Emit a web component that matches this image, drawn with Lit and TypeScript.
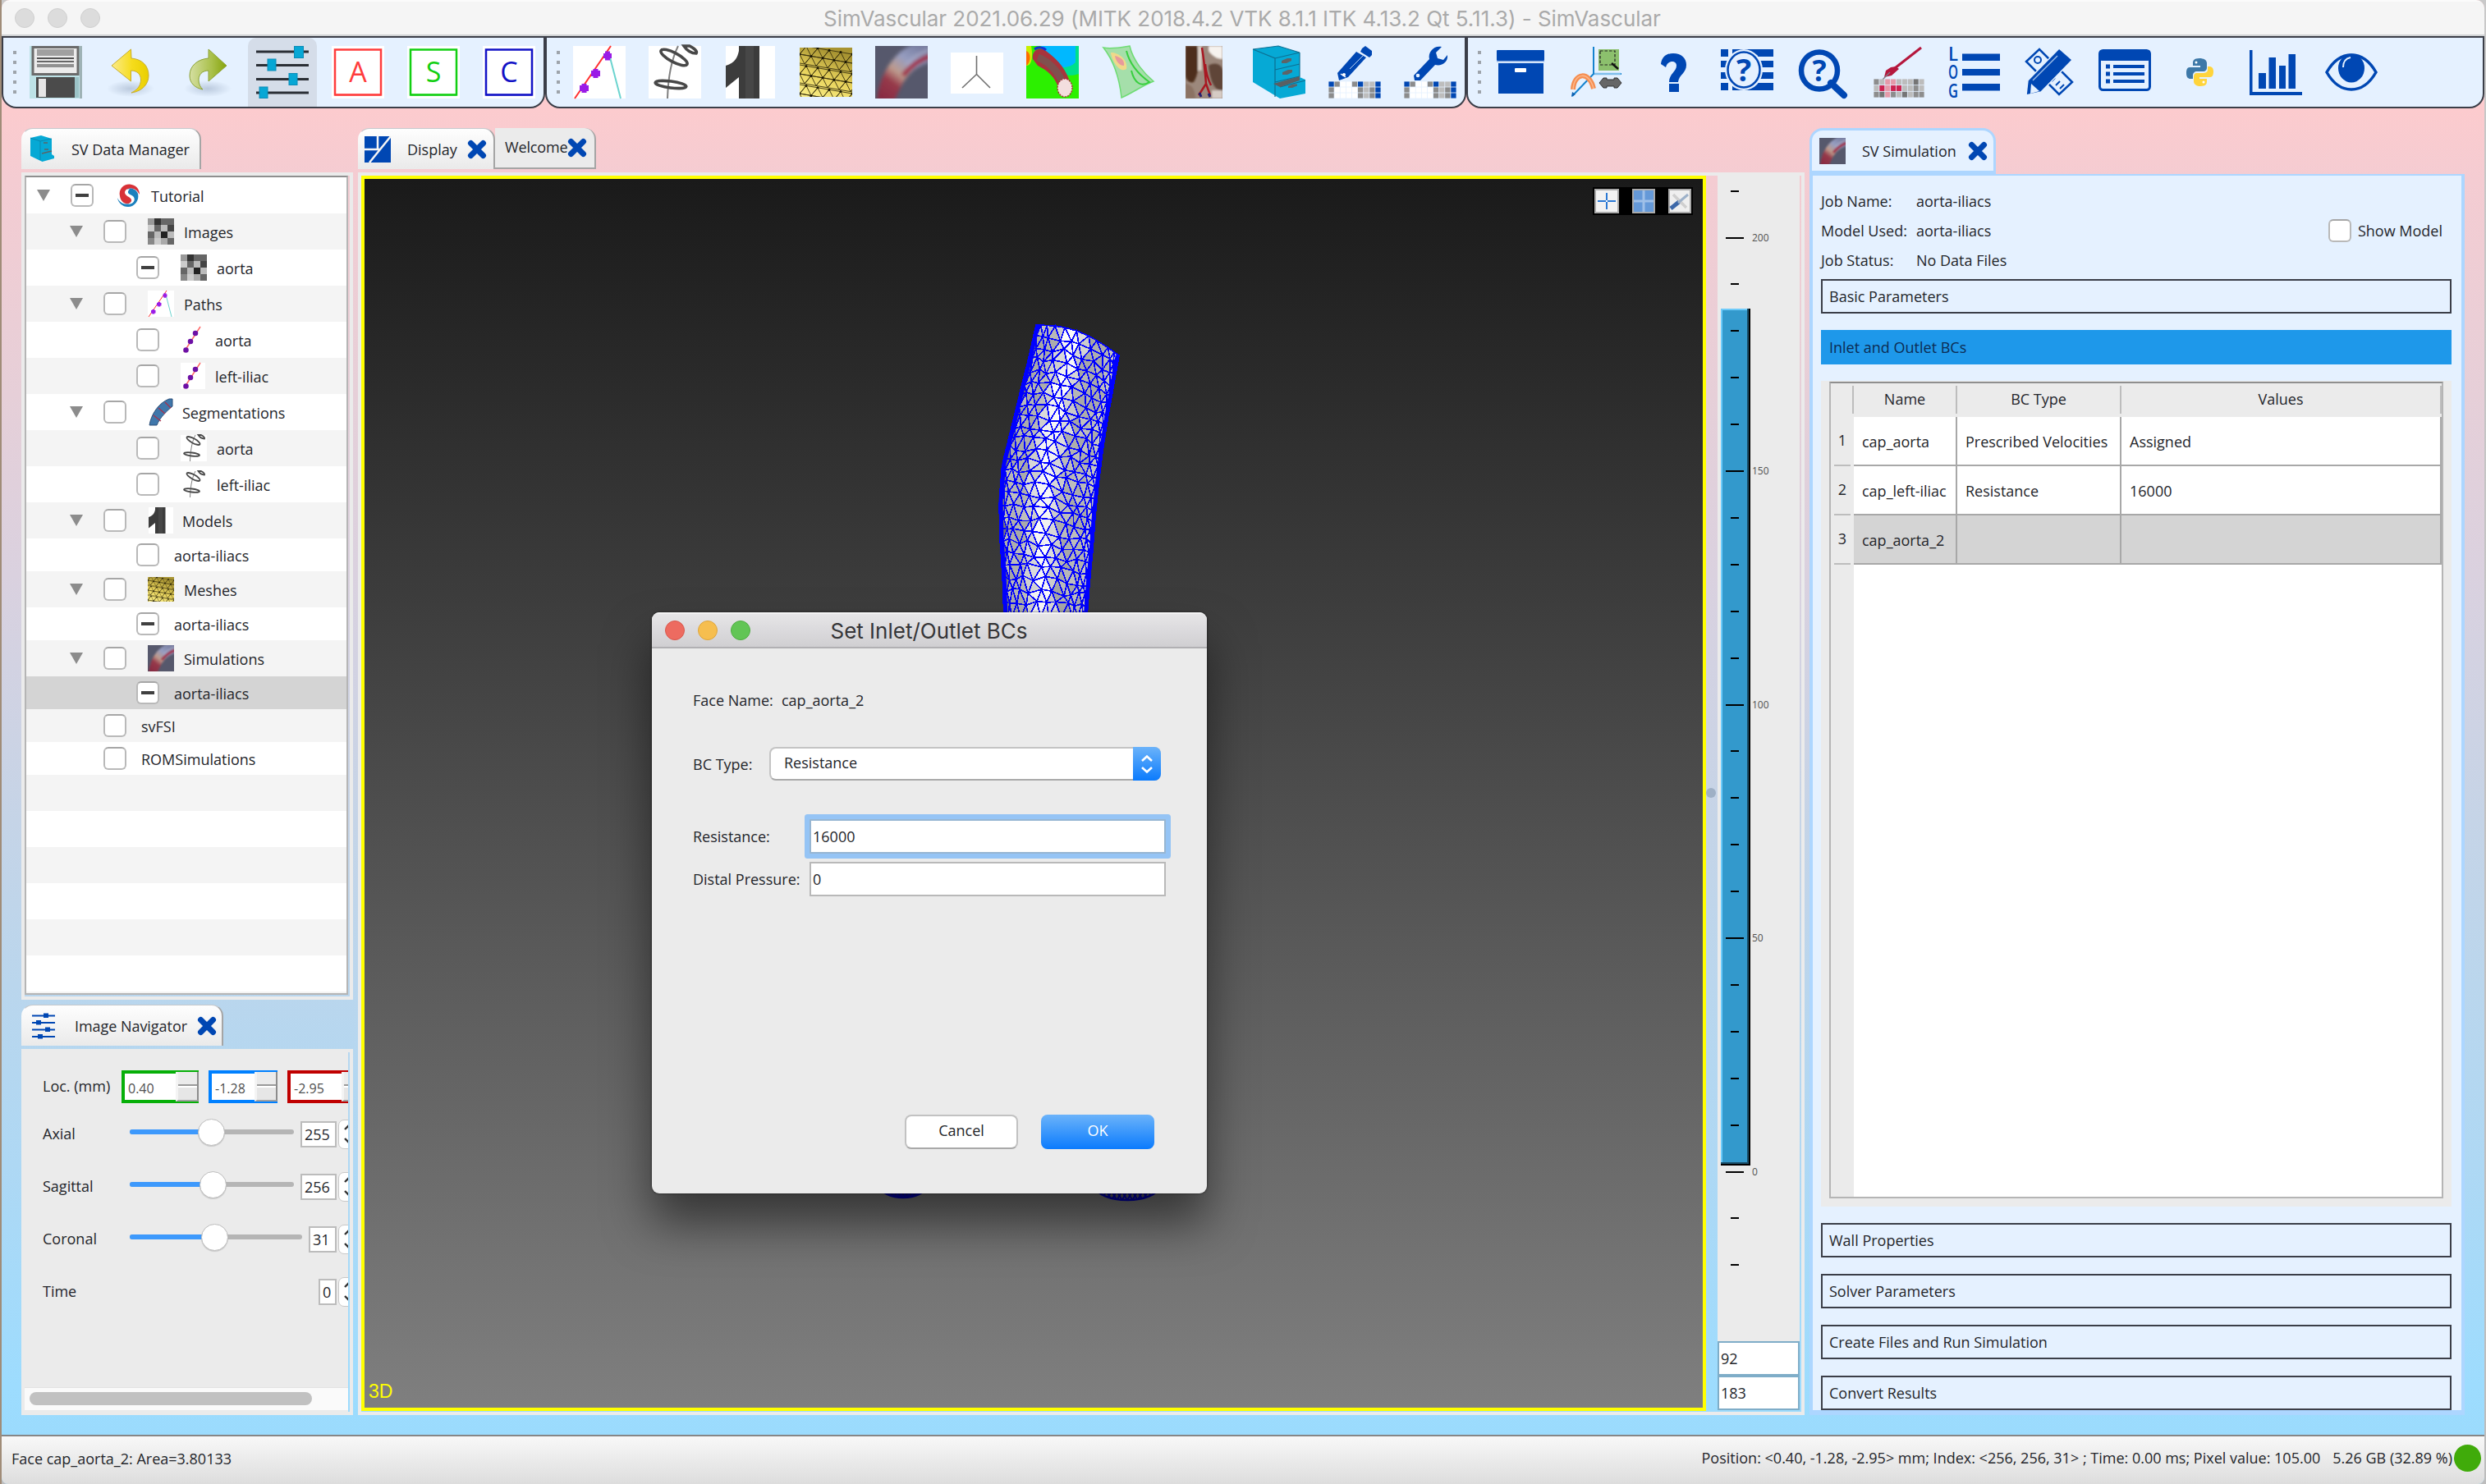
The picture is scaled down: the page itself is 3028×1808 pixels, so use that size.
import { LitElement, html, svg, css, nothing, TemplateResult, SVGTemplateResult } from "lit";
import { customElement } from "lit/decorators.js";
import { classMap } from "lit/directives/class-map.js";

const BLUE = "#0047b3";

/* ---------- deterministic noise, used by the textured glyphs and the mesh ---------- */
const noise = (n: number) => {
  const v = Math.sin(n * 127.1 + 311.7) * 43758.5453;
  return v - Math.floor(v);
};
const gray = (v: number) => {
  const c = Math.round(Math.max(0, Math.min(255, v)));
  return `rgb(${c},${c},${c})`;
};

/* ---------- pixel grids ---------- */
const cells = (cols: number, rows: number, x0: number, y0: number, w: number, h: number, inset: number, fill: (c: number, r: number) => string) => {
  const out: SVGTemplateResult[] = [];
  const cw = w / cols;
  const ch = h / rows;
  for (let r = 0; r < rows; r++)
    for (let c = 0; c < cols; c++)
      out.push(svg`<rect x=${x0 + c * cw + inset} y=${y0 + r * ch + inset} width=${cw - 2 * inset} height=${ch - 2 * inset} fill=${fill(c, r)} />`);
  return out;
};

const editGrid = () =>
  cells(9, 3, 0, 43, 64, 21, 0.4, (c, r) => {
    const rows = ["BgwwgBllB", "gwwwwglgB", "gwwwwglgB"];
    const map: Record<string, string> = { B: BLUE, g: "#8c8c8c", l: "#bdbdbd", w: "#ffffff" };
    return map[rows[r][c]];
  });

const meshLines = () => {
  const out: SVGTemplateResult[] = [];
  for (let r = 0; r < 6; r++)
    for (let c = 0; c < 6; c++) {
      const x = c * 14 + (r % 2) * 6 - 6;
      const y = -2 + r * 12 + c * 2.4;
      out.push(svg`<path d="M${x} ${y}l14 2.400l-8 9.600zM${x} ${y}l-8 9.600l14 2.400" fill="none" stroke="#3a3210" stroke-width="0.900" />`);
      out.push(svg`<circle cx=${x} cy=${y} r="1.500" fill="#1a1604" />`);
    }
  return out;
};

const qmark = (x: number, y: number, size: number, fill = BLUE) =>
  svg`<text x=${x} y=${y} font-size=${size} font-weight="700" fill=${fill} text-anchor="middle" class="glyph">?</text>`;

const ICONS: Record<string, () => SVGTemplateResult> = {
  save: () => svg`
    <rect width="64" height="64" fill="#bde2e6" /><rect x="61" width="3" height="64" fill="#9fb3b6" />
    <rect x="4" y="1.500" width="55" height="33" fill="#ececec" stroke="#6b6b6b" stroke-width="3" />
    <rect x="9" y="4" width="45" height="8" fill="#a0a0a0" /><rect x="9" y="14" width="45" height="2" fill="#555" />
    <rect x="9" y="18" width="45" height="2" fill="#666" /><rect x="9" y="22" width="45" height="4" fill="#909090" />
    <rect x="8" y="38" width="47" height="25" fill="#4b4b4b" /><rect x="11" y="40" width="9" height="22" fill="#e6e6e6" />
    <rect x="55" y="38" width="5" height="25" fill="#9cc3c7" />`,
  undo: () => svg`
    <defs><radialGradient id="sh"><stop offset="0" stop-color="#9fb0c8" stop-opacity=".6" /><stop offset="1" stop-color="#9fb0c8" stop-opacity="0" /></radialGradient>
    <linearGradient id="ye" x1="0" x2="1"><stop offset="0" stop-color="#fbeb8c" /><stop offset=".55" stop-color="#f6dc1c" /><stop offset="1" stop-color="#e9cf00" /></linearGradient></defs>
    <ellipse cx="31" cy="52" rx="29" ry="10" fill="url(#sh)" />
    <path d="M31.500 4L8 24l23.500 19V30c8 0 12 5 12 11c0 8-5 13-11.500 16c14-2 21-11 21-21c0-12-8-20-21-21z" fill="url(#ye)" stroke="#c9ae2c" stroke-width="1" />`,
  redo: () => svg`
    <defs><radialGradient id="sh2"><stop offset="0" stop-color="#9fb0c8" stop-opacity=".6" /><stop offset="1" stop-color="#9fb0c8" stop-opacity="0" /></radialGradient>
    <linearGradient id="gr" x1="0" x2="1"><stop offset="0" stop-color="#d5dfa2" /><stop offset=".6" stop-color="#a9c04a" /><stop offset="1" stop-color="#86a40c" /></linearGradient></defs>
    <ellipse cx="33" cy="52" rx="29" ry="10" fill="url(#sh2)" />
    <path d="M34 4l22 20l-22 19V30c-8 0-12 5-12 11c0 6 2 9 5 12c-10-2-16-8-16-17c0-12 10-20 23-21z" fill="url(#gr)" stroke="#8ca236" stroke-width="1" />`,
  sliders: () => svg`
    <path d="M0 7H64M0 23.500H64M0 40.500H64M0 57H64" stroke="#2b2f36" stroke-width="3" />
    <g fill="#07a7d5" stroke="#0b8cb8" stroke-width="1"><rect x="46.500" y="0.500" width="11" height="14" /><rect x="14" y="16" width="10" height="14" /><rect x="40" y="33.500" width="10" height="14" /><rect x="4" y="50" width="10" height="13.500" /></g>`,
  A: () => letter("A", "#ff3c3c"),
  S: () => letter("S", "#12cf12"),
  C: () => letter("C", "#1212c6"),
  path: () => svg`
    <rect width="64" height="64" fill="#fff" /><path d="M2 64L46 0" stroke="#ff3030" stroke-width="2" /><path d="M45 14L58 64" stroke="#6cd4cf" stroke-width="2" fill="none" />
    <g fill="#9a1be6"><path d="M37 9h10v6h-10zM39 6.500h6v11h-6z" /><path d="M22 30h11v7h-11zM24.500 28h6v11h-6z" /><path d="M8 48h11v7h-11zM10.500 46h6v11h-6z" /></g>`,
  pathnode: () => svg`
    <rect width="60" height="64" fill="#fff" /><path d="M8 62L48 0" stroke="#ff6a6a" stroke-width="3" />
    <g fill="#6d10a5"><circle cx="13" cy="57" r="6.500" /><circle cx="24" cy="36" r="6.500" /><circle cx="36" cy="16" r="6.500" /></g>`,
  contour: () => svg`
    <rect width="64" height="64" fill="#fff" /><path d="M36 0C30 12 24 30 23 64" stroke="#808080" stroke-width="2" fill="none" />
    <g fill="none" stroke="#484848" stroke-width="3.600"><ellipse cx="31" cy="14" rx="18" ry="5.500" transform="rotate(28 31 14)" /><ellipse cx="27" cy="47" rx="19" ry="4" transform="rotate(7 27 47)" /><path d="M43 0c4 6 10 9 15 9c2-3-4-7-8-9z" /></g>`,
  segment: () => svg`
    <path d="M4 64C8 38 26 10 52 0L60 0V18C48 28 30 44 22 64z" fill="#3f77ab" stroke="#2c4f78" stroke-width="2" />
    <path d="M14 40l18 14M26 22l16 14M42 8l14 14" stroke="#a8324c" stroke-width="2.500" />`,
  model: () => svg`
    <rect x="2" width="60" height="64" fill="#fff" /><path d="M18 0H43V64H18V38L2 51V24C14 20 16 14 18 6z" fill="#3c3c3c" /><path d="M26 0H36V64H26z" fill="#474747" />`,
  mesh: () => svg`
    <defs><linearGradient id="me" x1="0" y1="1" x2=".4" y2="0"><stop offset="0" stop-color="#fbf08a" /><stop offset=".5" stop-color="#e8d35c" /><stop offset="1" stop-color="#a89432" /></linearGradient>
    <clipPath id="mc"><rect y="2" width="64" height="60" /></clipPath></defs>
    <rect y="2" width="64" height="60" fill="url(#me)" /><g clip-path="url(#mc)">${meshLines()}</g>`,
  sim: () => svg`
    <defs><linearGradient id="si" x1="0" y1="1" x2=".7" y2="0"><stop offset="0" stop-color="#852640" /><stop offset=".35" stop-color="#963a4a" /><stop offset=".52" stop-color="#bd9a8c" /><stop offset=".75" stop-color="#969dc0" /><stop offset="1" stop-color="#7b81a4" /></linearGradient>
    <filter id="sb"><feGaussianBlur stdDeviation="2" /></filter><clipPath id="sc"><rect width="64" height="64" /></clipPath></defs>
    <rect width="64" height="64" fill="#56586c" />
    <g clip-path="url(#sc)"><g filter="url(#sb)"><path d="M2 66C6 34 22 8 46-2H66V20C46 26 36 36 24 66z" fill="url(#si)" /><path d="M68 12C52 17 42 26 34 36" stroke="#a02a44" stroke-width="6" fill="none" /><path d="M66 5C52 9 44 16 38 24" stroke="#aeadc8" stroke-width="4" fill="none" opacity=".6" /></g></g>`,
  branch: () => svg`<rect y="8" width="64" height="50" fill="#fff" /><path d="M31.500 12V34.500L14 51M31.500 34.500L48 51" fill="none" stroke="#707070" stroke-width="1.600" />`,
  result: () => svg`
    <rect width="64" height="64" fill="#2cf000" /><path d="M18 0H64V34C46 40 34 30 22 26z" fill="#00e08a" /><path d="M18 0H60V20C50 30 36 26 28 18z" fill="#00b8ff" />
    <path d="M0 6C8 8 8 22 0 24z" fill="#ff6a00" /><path d="M0 24C8 24 8 10 6 0H0V6C6 8 6 20 0 24z" fill="#c8f000" />
    <path d="M8 16C6 6 16 0 24 6C40 18 50 30 54 48L40 54C36 38 26 30 14 24z" fill="#a8343c" /><path d="M14 14C26 18 38 30 44 44" stroke="#80504e" stroke-width="9" fill="none" /><path d="M10 4c4-3 10-3 14 1" stroke="#1530d0" stroke-width="3" fill="none" /><ellipse cx="47" cy="51" rx="9" ry="11" fill="#f3dede" stroke="#a8343c" stroke-width="1.500" stroke-dasharray="2 1.500" />`,
  surface: () => svg`
    <path d="M2 2C12 4 22 2 34 0C38 18 52 34 63 43C50 48 36 58 24 63C22 44 16 20 2 2z" fill="#a5dfaa" stroke="#6fdc74" stroke-width="1.500" />
    <path d="M11 8C20 8 32 16 30 28C22 34 12 18 11 8z" fill="#efd98a" /><path d="M16 12C24 14 28 18 27 24C21 24 17 18 16 12z" fill="#e79a9c" /><path d="M30 6C34 22 44 34 58 44C48 50 40 46 36 30" fill="none" stroke="#37cf3e" stroke-width="2" />`,
  anatomy: () => svg`
    <defs><filter id="ab"><feGaussianBlur stdDeviation="1.300" /></filter><clipPath id="ac"><rect x="10" width="45" height="64" /></clipPath></defs>
    <g clip-path="url(#ac)"><rect x="10" width="45" height="64" fill="#9c887c" /><g filter="url(#ab)">
    <path d="M10 0H24C28 16 26 34 20 44C14 46 10 40 10 36z" fill="#4d2f1c" /><path d="M38 24C48 18 56 24 56 34V54C46 56 40 44 38 24z" fill="#5f4438" /><path d="M38 0H55V16C48 16 42 12 38 6z" fill="#f6f2ee" /><path d="M25 0h5v30h-5z" fill="#d8cdc4" /><path d="M10 46c6 0 12 6 12 18h-12z" fill="#8b7264" /><path d="M42 54h13v10h-13z" fill="#d6cbc4" /></g>
    <path d="M30 2C33 20 34 34 35 46L40 60M35 46L26 60M34 22C35 34 37 40 41 48" fill="none" stroke="#a81822" stroke-width="2.500" /><path d="M27 57l2 5M38 58l2 4" stroke="#242070" stroke-width="3" /></g>`,
  cabinet: () => svg`
    <path d="M0 4L31 0L57 8V38L64 41V58L33 64L0 44z" fill="#06a9d5" />
    <g fill="none" stroke="#0d6f92" stroke-width="1.200"><path d="M0 4L27 15V62M27 15L57 8M27 29L57 22M27 44L57 37M57 8V38M33 50L64 42M0 4L31 0L57 8" /></g>
    <path d="M25 46L57 37V42L33 50z" fill="#5a5f63" /><path d="M35 18l7-3h5v3l-6 3h-6zM36 32l7-3h5v3l-6 3h-6zM43 49l6-2.500h5v2l-6 2.500h-5z" fill="#5d6468" />`,
  cabinetSmall: () => svg`
    <path d="M4 6L30 0L56 8V46L62 50V56L33 64L4 50z" fill="#06a9d5" /><path d="M4 6L28 14V60M28 14L56 8" fill="none" stroke="#0d7fa4" stroke-width="1.500" />
    <path d="M36 18h10M38 34h10M32 44l24-6" stroke="#5a6468" stroke-width="3" />`,
  pencilGrid: () => svg`
    <g fill=${BLUE}><path d="M11 33L34 7L46 14L24 38L13 42z" /><path d="M41 3L45 0L53 6V11L50 14L39 7z" /></g><path d="M15 34l6 4" stroke="#fff" stroke-width="1.500" /><circle cx="19" cy="35" r="2" fill="#fff" /><path d="M26 28L42 12" stroke="#b8d0f0" stroke-width="1" />${editGrid()}`,
  wrenchGrid: () => svg`
    <path d="M12 36L31 16C29 8 36-1 46 1L39 8L41 15L48 17L53 11C54 20 46 25 38 23L20 42H13z" fill=${BLUE} /><circle cx="17" cy="36" r="2.300" fill="#e5f1ff" />${editGrid()}`,
  box: () => svg`
    <g fill=${BLUE}><rect x="3" y="5" width="58" height="13" rx="1" /><rect x="5" y="21" width="55" height="37" /></g><rect x="3" y="18" width="58" height="1.500" fill="#8fb1e4" /><rect x="25" y="27" width="14" height="5" rx="1" fill="#fff" />`,
  axes: () => svg`
    <rect x="35" y="4" width="25" height="26" fill="#8cc06d" /><rect x="37" y="6" width="18" height="17" fill="none" stroke="#222" stroke-width="1.200" stroke-dasharray="3.500 2" /><path d="M51 21l8 7" stroke="#111" stroke-width="2.500" />
    <path d="M29 1V34H63M29 34L3 61" fill="none" stroke="#1583cf" stroke-width="2" /><path d="M30 34H62" stroke="#7fbfeb" stroke-width="2.500" /><path d="M2 62l1-6l4 3z" fill="#0b5fb0" />
    <path d="M4 53C5 32 24 30 29 52" fill="none" stroke="#f58f52" stroke-width="6" /><path d="M4 53C5 32 24 30 29 52" fill="none" stroke="#fcb98f" stroke-width="1.500" />
    <path d="M36 45l5-6h4v2h9v-2h4l5 6l-5 6h-4v-2h-9v2h-4z" fill="#666" stroke="#333" stroke-width="1" />`,
  help: () => svg`<path d="M19 22C20 13 26 9 34 9C44 9 50 15 50 23C50 33 41 35 40 44H29C29 34 38 31 38 24C38 17 27 17 25 26z" fill=${BLUE} /><rect x="29" y="46" width="12" height="10" fill=${BLUE} />`,
  helpPage: () => svg`
    <g fill=${BLUE}><rect x="0" y="4" width="9" height="9" /><rect x="14" y="4" width="50" height="9" /><rect x="0" y="18" width="9" height="8" /><rect x="14" y="18" width="50" height="8" /><rect x="0" y="32" width="9" height="8" /><rect x="14" y="32" width="50" height="8" /><rect x="0" y="45" width="9" height="9" /><rect x="14" y="45" width="50" height="9" /></g>
    <ellipse cx="28" cy="29" rx="23" ry="25" fill="#e5f1ff" /><ellipse cx="28" cy="29" rx="19.500" ry="21.500" fill="none" stroke=${BLUE} stroke-width="2.500" />${qmark(28, 43, 38)}`,
  search: () => svg`
    <ellipse cx="28" cy="30" rx="22" ry="22.500" fill="#e5f1ff" stroke=${BLUE} stroke-width="6.500" /><path d="M42 45L58 60" stroke=${BLUE} stroke-width="8" stroke-linecap="round" />${qmark(28, 43, 36)}`,
  brush: () => svg`
    <path d="M60 2L28 27" stroke="#b5173d" stroke-width="3" /><path d="M29 25l4 3l-9 8l-9 2l2-8l6-4z" fill="#b5173d" /><path d="M22 32l-9 9" stroke="#7d7d86" stroke-width="1.500" />
    ${cells(9, 3, 2, 40, 62, 23, 0.4, (c, r) => {
      const rows = ["glppllldl", "lRpRRllgl", "gdpgldlgg"];
      const m: Record<string, string> = { g: "#8d8d8d", l: "#bcbcbc", d: "#757575", p: "#e59aa9", R: "#cc2450" };
      return m[rows[r][c]];
    })}`,
  log: () => svg`
    <g fill=${BLUE} font-size="24" font-weight="600" class="glyph"><text x="1" y="17.500" textLength="12" lengthAdjust="spacingAndGlyphs">L</text><text x="1" y="40" textLength="12" lengthAdjust="spacingAndGlyphs">O</text><text x="1" y="63" textLength="12" lengthAdjust="spacingAndGlyphs">G</text>
    <rect x="18" y="9.500" width="46" height="8.500" /><rect x="18" y="28" width="46" height="8" /><rect x="18" y="46" width="46" height="8.500" /></g>`,
  draft: () => svg`
    <path d="M4 19L20 4L60 44L44 59z" fill="#e5f1ff" stroke=${BLUE} stroke-width="2.500" /><circle cx="18" cy="17" r="4" fill="none" stroke=${BLUE} stroke-width="2" /><path d="M40 48l5-5M45 52l5-5M35 43l4-4" stroke=${BLUE} stroke-width="2" />
    <path d="M44 3L60 17L22 56L4 60L6 42z" fill=${BLUE} stroke="#e5f1ff" stroke-width="1.500" /><path d="M10 46l10 9l-11 3z" fill="#e5f1ff" /><path d="M12 42L42 12" stroke="#9ebde8" stroke-width="1.500" />`,
  list: () => svg`
    <rect x="1.500" y="5.500" width="61" height="48" rx="4" fill="#e5f1ff" stroke=${BLUE} stroke-width="3" /><rect x="1" y="5" width="62" height="13" rx="3" fill=${BLUE} />
    <g fill=${BLUE}><rect x="9" y="22.500" width="5" height="5" /><rect x="18" y="23" width="38" height="4" /><rect x="9" y="31.500" width="5" height="5" /><rect x="18" y="32" width="38" height="4" /><rect x="9" y="40.500" width="5" height="5" /><rect x="18" y="41" width="38" height="4" /></g>`,
  python: () => svg`
    <path d="M31 15C24 15 23 18 23 21V24H32V26H19C16 26 15 29 15 33C15 38 17 40 20 40H23V36C23 33 25 31 28 31H36C38 31 40 29 40 27V21C40 17 36 15 31 15z" fill="#3d78a8" />
    <path d="M32 49C39 49 40 46 40 43V40H31V38H44C47 38 48 35 48 31C48 27 46 25 43 25H41V29C41 32 38 33 35 33H28C25 33 24 35 24 38V43C24 47 28 49 32 49z" fill="#ffd43b" /><circle cx="27" cy="20" r="1.500" fill="#fff" /><circle cx="36" cy="44" r="1.500" fill="#fff" />`,
  chart: () => svg`
    <g fill=${BLUE}><rect x="0" y="5" width="3.500" height="55" /><rect x="0" y="56" width="64" height="4" /><rect x="11" y="33" width="9" height="19" /><rect x="23.500" y="14" width="8.500" height="38" /><rect x="36" y="24" width="8" height="28" /><rect x="47.500" y="10" width="8.500" height="42" /></g>`,
  eye: () => svg`
    <path d="M2 32C18 4 46 4 62 32C46 60 18 60 2 32z" fill="#e5f1ff" stroke=${BLUE} stroke-width="3.500" /><ellipse cx="32" cy="27" rx="16" ry="17.500" fill=${BLUE} /><path d="M22 26C22 19 26 15 31 14" stroke="#e5f1ff" stroke-width="2" fill="none" />`,
  pixels: () => svg`<rect width="64" height="64" fill="#9c9c9c" /><g shape-rendering="crispEdges">${cells(8, 4, 0, 0, 64, 64, 0, (c, r) => {
    const rows = ["99336666", "cc66bb44", "66bb22bb", "88ccaa66"];
    return gray(parseInt(rows[r][c], 16) * 17);
  })}</g>`,
  logo: () => svg`
    <path d="M12 34C8 16 22 4 36 5C50 6 60 16 60 30C54 18 44 12 32 16C22 20 22 28 34 34C42 38 46 46 34 52C22 54 14 46 12 34z" fill="#d83238" />
    <path d="M30 17C38 12 52 16 56 28C60 44 48 60 32 60C18 60 8 50 6 38C12 50 22 56 34 52C44 48 44 40 34 34C26 30 24 22 30 17z" fill="#1c80bd" /><path d="M28 18C20 26 26 32 34 36C44 42 42 50 30 54C46 54 52 42 44 34C36 28 26 28 36 16z" fill="#fff" />`,
  display: () => svg`
    <rect width="64" height="64" fill=${BLUE} /><path d="M0 32H36M32 0V32M64 0L12 64" stroke="#f5f5f5" stroke-width="5" fill="none" />`,
  navigator: () => svg`
    <path d="M4 7H60M4 24H60M4 41H60M4 58H60" stroke=${BLUE} stroke-width="4" /><g fill=${BLUE}><rect x="32" y="1" width="12" height="11" /><rect x="14" y="18" width="12" height="11" /><rect x="36" y="35" width="12" height="11" /><rect x="18" y="52" width="12" height="11" /></g>`,
};

function letter(ch: string, color: string): SVGTemplateResult {
  return svg`<rect width="64" height="64" fill="#fff" /><rect x="4" y="4.500" width="56" height="55" fill="none" stroke=${color} stroke-width="2.500" /><rect x="4" y="58.500" width="56" height="2.500" fill=${color} opacity=".5" /><text x="32" y="44" text-anchor="middle" font-size="34" fill=${color} class="glyph">${ch}</text>`;
}

const icon = (name: string, size = 64) =>
  html`<svg class="ico" width=${size} height=${size} viewBox="0 0 64 64" aria-hidden="true">${ICONS[name]()}</svg>`;

const closeX = () =>
  html`<svg class="ico" width="24" height="24" viewBox="0 0 24 24"><path d="M4.500 4.500L19.500 19.500M19.500 4.500L4.500 19.500" stroke=${BLUE} stroke-width="7" stroke-linecap="round" /></svg>`;

const TOOLBARS = [
  ["save", "undo", "redo", "sliders", "A", "S", "C"],
  ["path", "contour", "model", "mesh", "sim", "branch", "result", "surface", "anatomy", "cabinet", "pencilGrid", "wrenchGrid"],
  ["box", "axes", "help", "helpPage", "search", "brush", "log", "draft", "list", "python", "chart", "eye"],
];

interface TreeRow {
  depth: number;
  label: string;
  icon?: string;
  open?: boolean;
  partial?: boolean;
  selected?: boolean;
}
const TREE: TreeRow[] = [
  { depth: 0, label: "Tutorial", icon: "logo", open: true, partial: true },
  { depth: 1, label: "Images", icon: "pixels", open: true },
  { depth: 2, label: "aorta", icon: "pixels", partial: true },
  { depth: 1, label: "Paths", icon: "path", open: true },
  { depth: 2, label: "aorta", icon: "pathnode" },
  { depth: 2, label: "left-iliac", icon: "pathnode" },
  { depth: 1, label: "Segmentations", icon: "segment", open: true },
  { depth: 2, label: "aorta", icon: "contour" },
  { depth: 2, label: "left-iliac", icon: "contour" },
  { depth: 1, label: "Models", icon: "model", open: true },
  { depth: 2, label: "aorta-iliacs" },
  { depth: 1, label: "Meshes", icon: "mesh", open: true },
  { depth: 2, label: "aorta-iliacs", partial: true },
  { depth: 1, label: "Simulations", icon: "sim", open: true },
  { depth: 2, label: "aorta-iliacs", partial: true, selected: true },
  { depth: 1, label: "svFSI" },
  { depth: 1, label: "ROMSimulations" },
];

const BCS = [
  ["cap_aorta", "Prescribed Velocities", "Assigned"],
  ["cap_left-iliac", "Resistance", "16000"],
  ["cap_aorta_2", "", ""],
];

/* ---------- vessel surface ---------- */
const LEFT = [[1262, 396], [1252, 440], [1241, 484], [1231, 525], [1221, 565], [1217, 610], [1218, 655], [1221, 700], [1223, 752]];
const RIGHT = [[1363, 433], [1356, 472], [1349, 511], [1343, 550], [1338, 590], [1334, 630], [1331, 670], [1327, 711], [1324, 752]];

const along = (pts: number[][], t: number) => {
  const s = Math.min(0.9999, Math.max(0, t)) * (pts.length - 1);
  const i = Math.floor(s);
  const f = s - i;
  return [pts[i][0] + (pts[i + 1][0] - pts[i][0]) * f, pts[i][1] + (pts[i + 1][1] - pts[i][1]) * f];
};

const vessel = () => {
  const rows = 25;
  const cols = 12;
  const at = (r: number, c: number) => {
    const edge = c <= 0 || c >= cols;
    const base = Math.min(cols, Math.max(0, c + (edge ? 0 : (r % 2) * 0.5)));
    const j = edge ? 0 : (noise(r * 31 + c * 7) - 0.5) * 0.4;
    const k = r === 0 || r === rows ? 0 : (noise(r * 13 + c * 17) - 0.5) * 0.5;
    const u = (1 - Math.cos((Math.PI * Math.min(cols, Math.max(0, base + j))) / cols)) / 2;
    const t = Math.max(0, (r + k) / rows);
    const a = along(LEFT, t);
    const b = along(RIGHT, t);
    const bow = Math.sin(Math.PI * u) * (11 * (1 - t));
    return { x: a[0] + (b[0] - a[0]) * u, y: a[1] + (b[1] - a[1]) * u - bow, u };
  };
  const tri = (p: any, q: any, s: any, n: number) => {
    const u = (p.u + q.u + s.u) / 3;
    const d = Math.abs(u - 0.455);
    let v = 164 + noise(n) * 26;
    if (d < 0.08) v = 238 + noise(n) * 14;
    else if (d < 0.17) v = 200 + noise(n) * 22;
    if (u < 0.06) v = 120;
    if (u > 0.9) v = 195;
    return svg`<path d="M${p.x.toFixed(1)} ${p.y.toFixed(1)}L${q.x.toFixed(1)} ${q.y.toFixed(1)}L${s.x.toFixed(1)} ${s.y.toFixed(1)}z" fill=${gray(v)} />`;
  };
  const out: SVGTemplateResult[] = [];
  for (let r = 0; r < rows; r++)
    for (let c = 0; c < cols; c++) {
      const a = at(r, c), b = at(r, c + 1), d = at(r + 1, c), e = at(r + 1, c + 1);
      const n = r * 97 + c * 3;
      if (r % 2) out.push(tri(a, e, d, n), tri(a, b, e, n + 1));
      else out.push(tri(a, b, d, n), tri(b, e, d, n + 1));
    }
  const rim = (pts: number[][]) => "M" + pts.map((p) => p.join(" ")).join("L");
  return svg`<g stroke="#0000ff" stroke-width="1.700" shape-rendering="crispEdges">${out}</g>
    <path d=${rim(LEFT.map(([x, y]) => [x + 2, y]))} stroke="#0000ff" stroke-width="5" fill="none" /><path d=${rim(RIGHT.map(([x, y]) => [x - 2, y]))} stroke="#0000ff" stroke-width="4.500" fill="none" />`;
};

const capBit = (cx: number, cy: number, rx: number, ry: number, lit: string) => {
  const out: SVGTemplateResult[] = [];
  for (let i = -6; i <= 6; i++)
    out.push(svg`<path d="M${cx + (i * rx) / 6} ${cy - ry}l${rx / 2} ${ry * 2}M${cx + (i * rx) / 6} ${cy - ry}l${-rx / 2} ${ry * 2}" />`);
  return svg`<clipPath id="cb${cx}"><ellipse cx=${cx} cy=${cy} rx=${rx} ry=${ry} /></clipPath>
    <ellipse cx=${cx} cy=${cy} rx=${rx} ry=${ry} fill=${lit} stroke="#00009c" stroke-width="2.500" /><g stroke="#0000a0" stroke-width="2" fill="none" clip-path="url(#cb${cx})">${out}</g>`;
};

@customElement("app-root")
export class AppRoot extends LitElement {
  static styles = css`
    :host { display: block; width: 3028px; height: 1808px; overflow: hidden; font: 18px "Open Sans", "Noto Sans", sans-serif; color: #24262b; white-space: nowrap; }
    * { box-sizing: border-box; }
    .ico { display: block; flex: none; overflow: visible; }
    .glyph { font-family: "Open Sans", "Noto Sans", sans-serif; }
    .desk { height: 1808px; padding: 0 2px; background: linear-gradient(90deg, #a08c78 0 2px, transparent 2px), linear-gradient(#c9c9c9, #bdbdbd); }
    .win { height: 1808px; display: flex; flex-direction: column; border-radius: 10px 10px 8px 8px; overflow: hidden;
      background: linear-gradient(#fccbce 132px, #f4ccd2 220px, #e6cfd8 480px, #dad1df 700px, #c5d4e7 1000px, #bad6ed 1200px, #aed8f4 1420px, #9ddcfe 1690px, #9bdbfd 1750px); }
    .title { height: 44px; flex: none; display: flex; align-items: center; background: linear-gradient(#fbfbfb 0 2px, #f5f5f5 2px 42px, #cfd1d3 42px); padding: 0 16px; gap: 16px; }
    .light { width: 24px; height: 24px; border-radius: 50%; background: #dcdcdc; border: 1.500px solid #cfcfcf; flex: none; }
    .title span { flex: 1; text-align: center; margin-right: 122px; font: 26px Inter, "Open Sans", sans-serif; letter-spacing: -0.030px; color: #aaa; }
    .bars { display: flex; height: 88px; flex: none; }
    .bar { display: flex; align-items: center; border: 2px solid #3b3e48; border-radius: 0 0 18px 18px; background: #e5f1ff; padding-left: 10px; }
    .bar.b0 { width: 662px; } .bar.b1 { width: 1122px; } .bar.b2 { width: 1240px; }
    .grip { width: 4px; height: 52px; margin: 0 6px 0 2px; flex: none; background: repeating-linear-gradient(#9ea4ab 0 4px, transparent 4px 12px); }
    .btn { width: 84px; height: 84px; margin-right: 8px; display: grid; place-items: center; flex: none; }
    .btn.on { background: #d5dde9; border-radius: 10px 10px 0 0; }
    .btn:last-child { margin-right: 0; }
    .main { flex: 1; display: flex; padding: 24px 24px 0; }
    .tabs { height: 50px; display: flex; }
    .tab { height: 50px; display: flex; align-items: center; background: linear-gradient(#fefefe, #eaeaea); border-radius: 14px 14px 0 0; border: 1px solid #c6c9cc; border-right: 2px solid #a5a5a5; border-left-color: transparent; border-bottom: 0; }
    .panel { border: 4px solid #ebebeb; margin-top: 4px; }
    .left { width: 404px; display: flex; flex-direction: column; }
    .t-data { width: 219px; padding-left: 8px; gap: 20px; }
    .t-data svg { margin-top: -2px; }
    .tree { height: 1008px; padding-right: 2px; padding-bottom: 2px; }
    .frame { height: 998px; border: 2px solid #b5b5b5; border-top-color: #8f8f8f; background: #f4f4f4; }
    .row { height: 44px; display: flex; align-items: center; background: #f4f4f4; }
    .row:nth-child(odd) { background: #fff; }
    .row.short { height: 40px; }
    .row.sel { background: #d4d4d4; }
    .tri { width: 16px; height: 14px; margin: 0 25px 0 13px; background: #8c8c8c; clip-path: polygon(0 0, 100% 0, 50% 100%); flex: none; }
    .tri.no { visibility: hidden; }
    .cb { width: 28px; height: 28px; border: 2px solid #b9b9b9; border-top-color: #a6a6a6; border-radius: 6px; background: #fff; display: grid; place-items: center; flex: none; }
    .cb.partial::after { content: ""; width: 16px; height: 4px; background: #404040; }
    .row .ico { margin: 0 12px 0 26px; }
    .row .slim { margin-right: 10px; }
    .row .label { margin-top: 2px; }
    .row .label.bare { margin-left: 18px; }
    .t-nav { width: 246px; margin-top: 6px; padding-left: 10px; }
    .t-nav .name { margin: 0 12px 0 22px; letter-spacing: -0.050px; }
    .nav { height: 446px; display: flex; padding-right: 2px; background: linear-gradient(90deg, #ebebeb calc(100% - 2px), transparent 0); }
    .clip { width: 394px; overflow: hidden; display: flex; flex-direction: column; background: #ebebeb; padding-top: 22px; }
    .loc { display: flex; height: 40px; align-items: center; padding-left: 22px; margin-bottom: 6px; flex: none; }
    .loc .lbl { width: 96px; margin-top: -2px; flex: none; }
    .spin { height: 40px; display: flex; flex: none; background: #fff; border: 4px solid; border-right-width: 0; margin-right: 12px; align-items: center; font-size: 16px; color: #505050; padding-left: 4px; justify-content: space-between; }
    .spin em { font-style: normal; padding-top: 3px; }
    .spin b { width: 28px; height: 36px; background: linear-gradient(#ebebeb 0 15px, #9a9a9a 15px 17px, #fff 17px 19px, #e6e6e6 19px); border-right: 2px solid #8c8c8c; border-left: 3px solid #f4f4f4; border-bottom: 2px solid #a0a0a0; flex: none; }
    .g { width: 94px; border-color: #06af08; } .bl { width: 84px; border-color: #0080ff; } .rd { width: 94px; border-color: #c00000; }
    .srow { height: 64px; display: flex; align-items: center; padding-left: 22px; flex: none; }
    .srow .lbl { width: 106px; flex: none; margin-top: -2px; }
    .track { height: 6px; border-radius: 3px; background: #b5b5b5; display: flex; align-items: center; margin-bottom: 6px; flex: none; }
    .fill { height: 6px; background: #3d99fc; border-radius: 3px 0 0 3px; }
    .knob { width: 33px; height: 33px; border-radius: 50%; background: #fff; border: 1.500px solid #bdbdbd; margin-left: -16px; flex: none; box-shadow: 0 1px 1px rgba(0,0,0,.15); }
    .val { height: 32px; border: 2px solid #bcbcbc; background: #fff; display: grid; align-items: center; padding-left: 3px; margin-left: auto; }
    .ud { width: 26px; height: 36px; margin-left: 2px; margin-right: -14px; border-radius: 7px; border: 1.500px solid #c8c8c8; background: #fff; flex: none; display: grid; place-items: center; }
    .scroll { height: 28px; margin-top: auto; background: #fafafa; border-top: 1px solid #e2e2e2; display: flex; align-items: center; padding-left: 6px; flex: none; margin-bottom: 2px; }
    .scroll i { width: 344px; height: 16px; border-radius: 8px; background: #c1c1c1; margin-top: -2px; }
    .mid { width: 1762px; margin-left: 6px; }
    .t-disp { width: 167px; padding-left: 7px; }
    .t-disp .name { margin: 1px 12px 0 20px; }
    .t-welc { width: 123px; background: #ebebeb; border-bottom: 2px solid #a5a5a5; border-left: 0; border-top: 0; border-radius: 0 14px 0 0; padding-left: 12px; }
    .t-welc .name { margin-top: -2px; letter-spacing: -0.150px; }
    .editor { height: 1514px; display: flex; padding-bottom: 2px; }
    .view { width: 1638px; height: 1505px; position: relative; border: 4px solid #ff0; background: linear-gradient(#1a1a1a, #7f7f7f); }
    .scene { position: absolute; left: 0; top: 0; }
    .tag { position: absolute; left: 5px; bottom: 7px; color: #ff0; font: 23px "Liberation Sans", Arial, sans-serif; line-height: 26px; }
    .vbtns { position: absolute; right: 12px; top: 10px; width: 122px; height: 34px; background: #000; display: flex; align-items: center; justify-content: space-between; padding: 0 2px; }
    .gap { width: 14px; display: grid; align-items: center; }
    .gap i { width: 12px; height: 12px; border-radius: 50%; background: #9fb0c5; }
    .stepper { width: 102px; display: flex; flex-direction: column; background: linear-gradient(90deg, #ebebeb 100px, transparent 100px); }
    .scale { height: 1420px; }
    .num { height: 42px; width: 100px; border: 2px solid #7fadc8; background: #fff; padding-left: 2px; display: flex; align-items: center; }
    .small { font: 12px "Open Sans", sans-serif; fill: #505050; }
    .right { width: 798px; margin-left: 6px; }
    .t-sim { width: 227px; height: 56px; background: #e5f1ff; border: 3px solid #add6ff; border-bottom-width: 4px; border-radius: 16px 16px 0 0; padding-left: 9px; display: flex; align-items: center; }
    .t-sim .name { margin: 0 14px 0 20px; }
    .simp { height: 1512px; border: 4px solid #add6ff; border-top-width: 2px; border-bottom-width: 6px; background: #e5f1ff; padding: 13px 12px 0 10px; display: flex; flex-direction: column; }
    .facts { display: grid; grid-template-columns: 116px 1fr auto; grid-auto-rows: 36px; align-items: center; margin-bottom: 5px; flex: none; }
    .show { display: flex; align-items: center; gap: 8px; padding-right: 11px; }
    .acc { height: 42px; border: 2px solid #3b3e48; display: flex; align-items: center; padding-left: 8px; margin-bottom: 20px; flex: none; }
    .acc.on { background: #1e98ea; border-color: #1e98ea; color: #0c2c54; }
    .acc:last-child { margin-bottom: 0; }
    .tblwrap { background: #ebebeb; height: 1006px; padding: 1px 10px 10px; margin-bottom: 20px; flex: none; }
    .tbl { height: 995px; border: 2px solid #b5b5b5; border-top-color: #8f8f8f; background: linear-gradient(90deg, #ebebeb 28px, #fff 28px); }
    .tr { display: grid; grid-template-columns: 28px 126px 200px 1fr; height: 60px; }
    .hd { height: 41px; background: #ebebeb; }
    .hd div { text-align: center; margin: 3px 0 4px; border-right: 2px solid #bdbdbd; line-height: 33px; }
    .td { border-right: 2px solid #a8a8a8; border-bottom: 2px solid #a8a8a8; display: flex; align-items: center; padding: 2px 0 0 10px; background: #fff; }
    .tn { border-bottom: 2px solid #bdbdbd; margin: 0 4px; display: grid; place-items: center; padding-bottom: 3px; }
    .tr.sel .td { background: #d4d4d4; }
    .status { height: 60px; border-top: 2px solid #868686; background: linear-gradient(#f8f8f8, #dddddd); display: flex; align-items: center; padding: 0 4px 4px 12px; flex: none; }
    .status .pos { margin-left: auto; margin-right: 15px; }
    .status .r { margin-top: -3px; }
    .status i { width: 33px; height: 33px; border-radius: 50%; background: #40ab0a; margin-left: 2px; margin-top: -2px; }
    .dlg { position: absolute; left: 350px; top: 528px; width: 676px; height: 708px; border-radius: 9px; background: #ebebeb; box-shadow: 0 36px 56px rgba(0,0,0,.5), 0 0 3px rgba(0,0,0,.6); display: flex; flex-direction: column; }
    .dt { height: 44px; border-radius: 9px 9px 0 0; background: linear-gradient(#f4f4f4 0 2px, #e6e5e7 2px, #d0cfd2); border-bottom: 2px solid #b1b0b3; display: flex; align-items: center; padding: 2px 0 0 16px; gap: 16px; flex: none; }
    .dt .light { border-width: 1px; }
    .red { background: #ed6b60; border-color: #d9564a; } .amb { background: #f6be4f; border-color: #dfa53b; } .grn { background: #62c555; border-color: #4fae42; }
    .dt span { flex: 1; text-align: center; margin-right: 137px; font: 26px Inter, "Open Sans", sans-serif; color: #353537; }
    .db { flex: 1; display: flex; flex-direction: column; padding: 42px 50px 54px 50px; }
    .dr { display: flex; align-items: center; height: 41px; flex: none; }
    .dr .a { width: 93px; } .dr .c { width: 142px; }
    .combo { width: 477px; height: 41px; background: #fff; border: 2px solid #c4c4c4; border-bottom-color: #a9a9a9; border-radius: 8px; display: flex; align-items: center; padding-left: 16px; position: relative; }
    .combo span { margin-top: -4px; }
    .combo b { position: absolute; right: -2px; top: -2px; width: 34px; height: 41px; border-radius: 0 8px 8px 0; background: linear-gradient(#6bb3fa, #0b7bfd); display: grid; place-items: center; }
    .in { width: 434px; height: 42px; background: #fff; border: 2px solid #b9b9b9; padding-left: 2px; display: flex; align-items: center; }
    .in.focus { border-color: #97b6d2; box-shadow: 0 0 0 6px #95c4f5; border-radius: 1px; }
    .acts { margin-top: auto; display: flex; justify-content: flex-end; gap: 28px; padding-right: 14px; }
    .pb { width: 138px; height: 42px; border-radius: 8px; border: 2px solid #c2c2c2; border-bottom-color: #a9a9a9; background: #fff; display: grid; place-items: center; padding-bottom: 4px; }
    .pb.ok { background: linear-gradient(#6bb3fa, #0b7bfd); border: 0; color: #fff; }
  `;

  private treeRow(r: TreeRow): TemplateResult {
    const i = r.icon;
    const slim = i === "pathnode" || i === "segment" || i === "model";
    return html`<div class=${classMap({ row: true, short: !i, sel: !!r.selected })} style="padding-left:${r.depth * 40}px">
      <i class=${classMap({ tri: true, no: !r.open })}></i>
      <span class=${classMap({ cb: true, partial: !!r.partial })}></span>
      ${i ? html`<svg class=${classMap({ ico: true, slim })} width="32" height="32" viewBox="0 0 64 64">${ICONS[i]()}</svg>` : nothing}
      <span class=${classMap({ label: true, bare: !i })}>${r.label}</span>
    </div>`;
  }

  private slider(label: string, width: number, pos: number, value: string, vw: number) {
    return html`<div class="srow"><span class="lbl">${label}</span>
      ${width ? html`<span class="track" style="width:${width}px"><span class="fill" style="width:${pos}px"></span><span class="knob"></span></span>` : nothing}
      <span class="val" style="width:${vw}px">${value}</span>
      <span class="ud"><svg width="14" height="26" viewBox="0 0 14 26" fill="none" stroke="#333" stroke-width="2.400"><path d="M2 7L7 2L12 7M2 18L7 23L12 18" /></svg></span></div>`;
  }

  private scale() {
    const ticks: SVGTemplateResult[] = [];
    for (let v = -20; v <= 210; v += 10) {
      const y = Math.round(1427.5 - 214 - v * 5.69) - 1;
      const long = v % 50 === 0;
      ticks.push(svg`<rect x=${long ? 10 : 16} y=${y} width=${long ? 22 : 10} height="2" fill="#000" />`);
      if (long && v >= 0) ticks.push(svg`<text class="small" x="42" y=${y + 5}>${v}</text>`);
    }
    return html`<svg class="scale" width="100" height="1420" viewBox="0 0 100 1420">
      <rect x="4" y="162" width="36" height="1044" fill="#000" /><rect x="4" y="162" width="34" height="1042" fill="#1a4d66" /><rect x="4" y="162" width="32" height="1040" fill="#6ecbfa" /><rect x="6" y="164" width="30" height="1038" fill="#3399cc" />
      ${ticks}</svg>`;
  }

  render() {
    return html`<div class="desk"><div class="win">
      <div class="title"><i class="light"></i><i class="light"></i><i class="light"></i><span>SimVascular 2021.06.29 (MITK 2018.4.2 VTK 8.1.1 ITK 4.13.2 Qt 5.11.3) - SimVascular</span></div>
      <div class="bars">${TOOLBARS.map((t, n) => html`<div class="bar b${n}"><i class="grip"></i>${t.map((k) => html`<span class=${classMap({ btn: true, on: k === "sliders" })}>${icon(k)}</span>`)}</div>`)}</div>
      <div class="main">
        <section class="left">
          <div class="tab t-data">${icon("cabinetSmall", 32)}<span>SV Data Manager</span></div>
          <div class="panel tree"><div class="frame">
            ${TREE.map((r) => this.treeRow(r))}
            ${[0, 1, 2, 3, 4, 5].map(() => html`<div class="row"></div>`)}
          </div></div>
          <div class="tab t-nav">${icon("navigator", 32)}<span class="name">Image Navigator</span>${closeX()}</div>
          <div class="panel nav"><div class="clip">
            <div class="loc"><span class="lbl">Loc. (mm)</span>
              <span class="spin g"><em>0.40</em><b></b></span><span class="spin bl"><em>-1.28</em><b></b></span><span class="spin rd"><em>-2.95</em><b></b></span></div>
            ${this.slider("Axial", 200, 99, "255", 44)}
            ${this.slider("Sagittal", 200, 101, "256", 44)}
            ${this.slider("Coronal", 210, 103, "31", 34)}
            ${this.slider("Time", 0, 0, "0", 22)}
            <div class="scroll"><i></i></div>
          </div></div>
        </section>
        <section class="mid">
          <div class="tabs"><div class="tab t-disp">${icon("display", 32)}<span class="name">Display</span>${closeX()}</div><div class="tab t-welc"><span class="name">Welcome</span>${closeX()}</div></div>
          <div class="panel editor">
            <div class="view">
              <svg class="scene" width="1630" height="1497" viewBox="444 218 1630 1497">${vessel()}${capBit(1100, 1446, 27, 13, "#10105c")}${capBit(1373, 1446, 38, 16, "#55555c")}</svg>
              <div class="vbtns">
                <svg width="30" height="30" viewBox="0 0 30 30"><rect x="1" y="1" width="28" height="28" fill="#f2f2f2" stroke="#aaa" stroke-width="2" /><path d="M4 15H26M15 5V25" stroke="#2a78d4" stroke-width="2" /><rect x="14" y="14" width="2" height="2" fill="#fff" /></svg>
                <svg width="28" height="30" viewBox="0 0 28 30"><rect x="1" y="1" width="26" height="28" fill="#6599d8" stroke="#aaa" stroke-width="2" /><path d="M2 15H26M14 2V28" stroke="#9fc0e8" stroke-width="3" /></svg>
                <svg width="28" height="30" viewBox="0 0 28 30"><rect x="1" y="1" width="26" height="28" fill="#efefef" stroke="#aaa" stroke-width="2" /><path d="M6 7L22 23" stroke="#cfcfcf" stroke-width="3.500" /><path d="M3 24L13 16" stroke="#3d68a8" stroke-width="5" /><path d="M12 17L24 7" stroke="#9db1c9" stroke-width="3" /></svg>
              </div>
              <div class="tag">3D</div>
              <div class="dlg">
                <div class="dt"><i class="light red"></i><i class="light amb"></i><i class="light grn"></i><span>Set Inlet/Outlet BCs</span></div>
                <div class="db">
                  <div class="dr"><span style="width:108px">Face Name:</span><span>cap_aorta_2</span></div>
                  <div class="dr" style="margin-top:37px"><span class="a">BC Type:</span><div class="combo"><span>Resistance</span><b><svg width="14" height="24" viewBox="0 0 14 24" fill="none" stroke="#fff" stroke-width="2.600"><path d="M1 8L7 2.500L13 8M1 16L7 21.500L13 16" /></svg></b></div></div>
                  <div class="dr" style="margin-top:47px;height:42px"><span class="c">Resistance:</span><div class="in focus">16000</div></div>
                  <div class="dr" style="margin-top:10px;height:42px"><span class="c">Distal Pressure:</span><div class="in">0</div></div>
                  <div class="acts"><div class="pb">Cancel</div><div class="pb ok">OK</div></div>
                </div>
              </div>
            </div>
            <div class="gap"><i></i></div>
            <div class="stepper">${this.scale()}<div class="num">92</div><div class="num">183</div></div>
          </div>
        </section>
        <section class="right">
          <div class="t-sim">${icon("sim", 32)}<span class="name">SV Simulation</span>${closeX()}</div>
          <div class="simp">
            <div class="facts">
              <span>Job Name:</span><span>aorta-iliacs</span><span></span>
              <span>Model Used:</span><span>aorta-iliacs</span><span class="show"><i class="cb"></i>Show Model</span>
              <span>Job Status:</span><span>No Data Files</span><span></span>
            </div>
            <div class="acc">Basic Parameters</div>
            <div class="acc on">Inlet and Outlet BCs</div>
            <div class="tblwrap"><div class="tbl">
              <div class="tr hd"><div></div><div>Name</div><div>BC Type</div><div>Values</div></div>
              ${BCS.map((r, i) => html`<div class=${classMap({ tr: true, sel: i === 2 })}><div class="tn">${i + 1}</div>${r.map((c) => html`<div class="td">${c}</div>`)}</div>`)}
            </div></div>
            ${["Wall Properties", "Solver Parameters", "Create Files and Run Simulation", "Convert Results"].map((t) => html`<div class="acc">${t}</div>`)}
          </div>
        </section>
      </div>
      <div class="status"><span>Face cap_aorta_2: Area=3.80133</span><span class="pos r">Position: &lt;0.40, -1.28, -2.95&gt; mm; Index: &lt;256, 256, 31&gt; ; Time: 0.00 ms; Pixel value: 105.00</span><span class="r">5.26 GB (32.89 %)</span><i></i></div>
    </div></div>`;
  }
}
